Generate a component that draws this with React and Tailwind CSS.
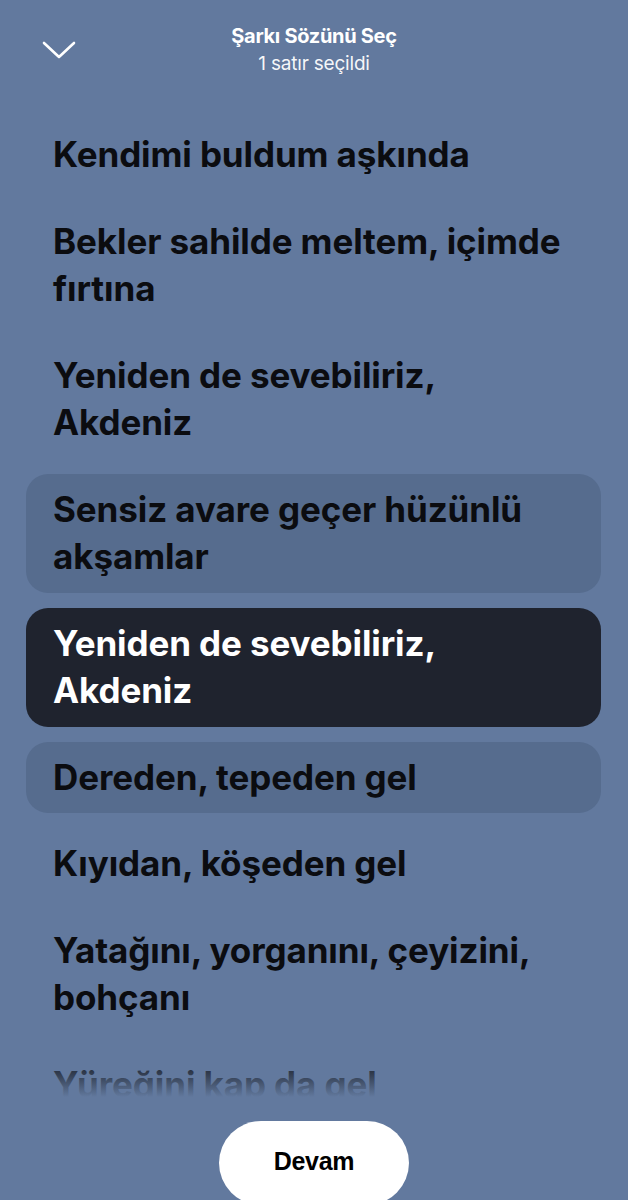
const lines = [
  { text: 'Kendimi buldum aşkında' },
  { text: 'Bekler sahilde meltem, içimde fırtına' },
  { text: 'Yeniden de sevebiliriz, Akdeniz' },
  { text: 'Sensiz avare geçer hüzünlü akşamlar', state: 'soft' },
  { text: 'Yeniden de sevebiliriz, Akdeniz', state: 'selected' },
  { text: 'Dereden, tepeden gel', state: 'soft' },
  { text: 'Kıyıdan, köşeden gel' },
  { text: 'Yatağını, yorganını, çeyizini, bohçanı' },
  { text: 'Yüreğini kap da gel' },
  { text: 'Sen de gel' },
];

function Chevron() {
  return (
    <svg width="34" height="20" viewBox="0 0 34 20" fill="none" className="block">
      <path d="M2 3 L17 17 L32 3" stroke="white" strokeWidth="2.6" strokeLinecap="round" strokeLinejoin="round" />
    </svg>
  );
}

export default function App() {
  return (
    <div className="relative flex h-[1200px] w-full flex-col overflow-hidden bg-[#62799e] font-['Inter',sans-serif]">
      <header className="relative flex h-[119px] shrink-0 flex-col items-center pt-[21px]">
        <div className="absolute left-[42px] top-[40px]">
          <Chevron />
        </div>
        <h1 className="text-[20px] font-bold leading-[30px] tracking-[-0.3px] text-white">Şarkı Sözünü Seç</h1>
        <p className="text-[19px] leading-[26px] tracking-[-0.2px] text-white/95">1 satır seçildi</p>
      </header>

      <div className="relative h-[978px] shrink-0 overflow-hidden">
        <ul className="flex flex-col gap-[15px] pl-[26px] pr-[27px]">
          {lines.map((l, i) => {
            const bg =
              l.state === 'selected'
                ? 'bg-[#1f232e] text-white'
                : l.state === 'soft'
                ? 'bg-[#566c8e] text-[#0b0c10]'
                : 'text-[#0b0c10]';
            return (
              <li
                key={i}
                className={`rounded-[22px] py-[12px] pl-[27px] pr-[26px] text-[35px] font-bold leading-[47.5px] tracking-[-0.1px] ${bg}`}
              >
                {l.text}
              </li>
            );
          })}
        </ul>
        <div className="pointer-events-none absolute bottom-0 left-0 right-0 h-[42px] bg-gradient-to-b from-[#62799e]/0 to-[#62799e]" />
      </div>

      <div className="flex flex-1 justify-center pt-[24px]">
        <button className="h-[84px] w-[190px] rounded-full bg-white pb-[2px] font-['Liberation_Sans',sans-serif] text-[25px] font-bold tracking-[-0.3px] text-black">
          Devam
        </button>
      </div>
    </div>
  );
}
